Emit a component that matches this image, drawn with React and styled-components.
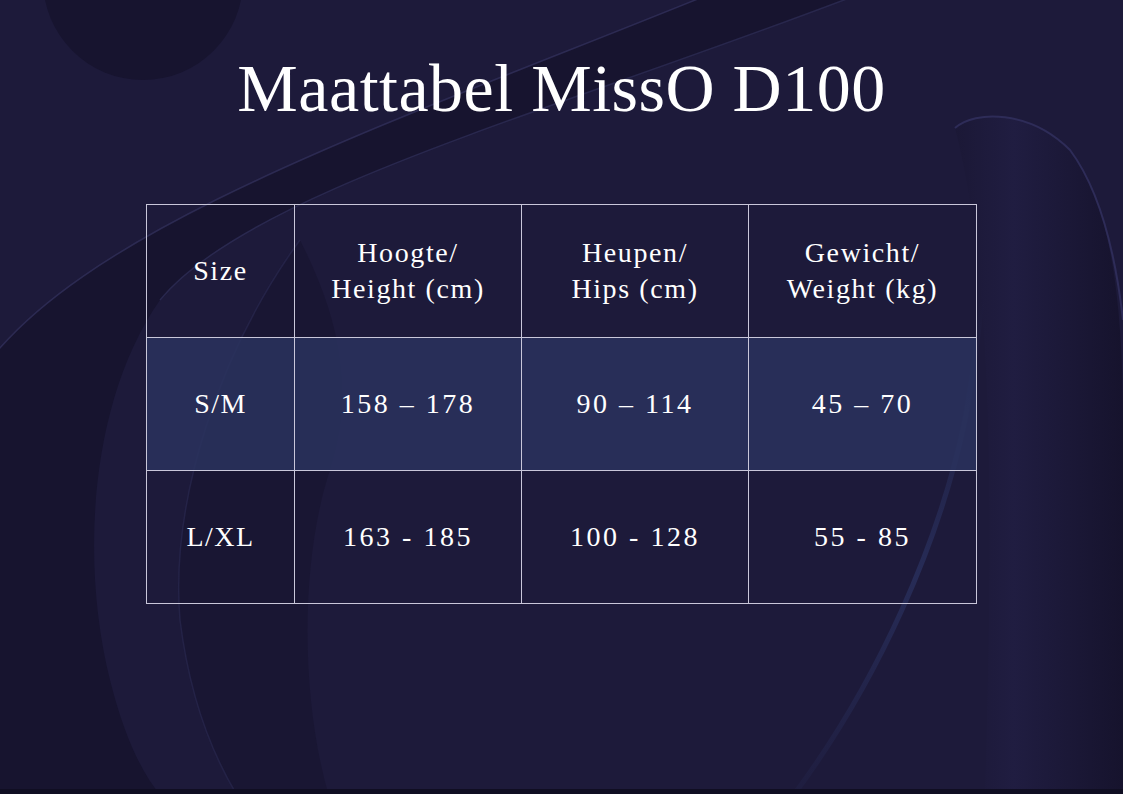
import styled, { createGlobalStyle } from "styled-components";

const rows = [
  { size: "S/M", height: "158 – 178", hips: "90 – 114", weight: "45 – 70", highlight: true },
  { size: "L/XL", height: "163 - 185", hips: "100 - 128", weight: "55 - 85" },
];

const GlobalStyle = createGlobalStyle`
  html, body {
    margin: 0;
    padding: 0;
    background: #1d1a3a;
  }
  * { box-sizing: border-box; }
`;

const Page = styled.div`
  position: relative;
  width: 1123px;
  height: 794px;
  overflow: hidden;
  background: #1d1a3a;
  font-family: "Liberation Serif", "DejaVu Serif", serif;
  color: #ffffff;
  display: flex;
  flex-direction: column;
  align-items: center;
`;

const Backdrop = styled.svg`
  position: absolute;
  inset: 0;
  width: 100%;
  height: 100%;
  z-index: 0;
`;

const Content = styled.div`
  position: relative;
  z-index: 1;
  display: flex;
  flex-direction: column;
  align-items: center;
  padding-top: 48px;
`;

const Title = styled.h1`
  margin: 0;
  font-weight: 400;
  font-size: 68px;
  line-height: 80px;
  letter-spacing: 0.5px;
`;

const Table = styled.table`
  margin-top: 76px;
  border-collapse: collapse;
  table-layout: fixed;
  width: 830px;
`;

const Cell = styled.td`
  border: 1.5px solid #c9c7da;
  height: 133px;
  text-align: center;
  vertical-align: middle;
  font-size: 28px;
  line-height: 36px;
  letter-spacing: ${(p) => (p.$wide ? "2.5px" : "1.5px")};
  background: ${(p) => (p.$highlight ? "rgba(42, 50, 94, 0.85)" : "transparent")};
`;

const Head = styled(Cell).attrs({ as: "th" })`
  font-weight: 400;
  letter-spacing: 1.6px;
`;

export default function App() {
  return (
    <Page>
      <GlobalStyle />
      <Backdrop viewBox="0 0 1123 794" preserveAspectRatio="none">
        <defs>
          <linearGradient id="rightShape" x1="0" y1="0" x2="1" y2="0">
            <stop offset="0" stopColor="#1b1836" />
            <stop offset="0.35" stopColor="#201d41" />
            <stop offset="1" stopColor="#16132d" />
          </linearGradient>
          <linearGradient id="glow" x1="0" y1="1" x2="0" y2="0">
            <stop offset="0" stopColor="#2c3668" stopOpacity="0.1" />
            <stop offset="0.45" stopColor="#2d3769" stopOpacity="0.6" />
            <stop offset="1" stopColor="#2d3769" stopOpacity="0" />
          </linearGradient>
        </defs>
        <circle cx="143" cy="-20" r="100" fill="#17142f" />
        <path d="M-10 360 C 100 220, 400 120, 720 -10 L 870 -10 C 560 110, 250 190, 160 300 C 90 400, 80 560, 110 680 C 125 740, 145 780, 165 800 L -10 800 Z" fill="#17142f" />
        <path d="M-10 360 C 100 220, 400 120, 720 -10" stroke="#34335f" strokeWidth="1.5" fill="none" opacity="0.7" />
        <path d="M870 -10 C 560 110, 250 190, 160 300" stroke="#34335f" strokeWidth="1.5" fill="none" opacity="0.6" />
        <path d="M300 240 C 220 350, 170 500, 180 620 C 190 700, 215 760, 240 800 L 330 800 C 300 700, 300 560, 330 470 C 360 380, 330 300, 300 240 Z" fill="#17142f" opacity="0.6" />
        <path d="M300 240 C 220 350, 170 500, 180 620 C 190 700, 215 760, 240 800" stroke="#2e2d58" strokeWidth="1.5" fill="none" opacity="0.5" />
        <path d="M955 128 C 975 110, 1030 110, 1070 150 C 1110 200, 1123 300, 1123 420 L 1123 794 L 985 794 C 990 600, 1000 300, 955 128 Z" fill="url(#rightShape)" />
        <path d="M955 128 C 975 110, 1030 110, 1070 150 C 1100 190, 1115 250, 1123 320" stroke="#2e2c58" strokeWidth="2" fill="none" />
        <path d="M790 800 C 880 680, 940 540, 965 420 C 972 380, 978 340, 982 300" stroke="url(#glow)" strokeWidth="5" fill="none" />
        <rect x="0" y="789" width="1123" height="5" fill="#100e22" />
      </Backdrop>
      <Content>
        <Title>Maattabel MissO D100</Title>
        <Table>
          <colgroup>
            <col style={{ width: 148 }} />
            <col style={{ width: 227 }} />
            <col style={{ width: 227 }} />
            <col style={{ width: 228 }} />
          </colgroup>
          <thead>
            <tr>
              <Head>Size</Head>
              <Head>Hoogte/<br />Height (cm)</Head>
              <Head>Heupen/<br />Hips (cm)</Head>
              <Head>Gewicht/<br />Weight (kg)</Head>
            </tr>
          </thead>
          <tbody>
            {rows.map((r) => (
              <tr key={r.size}>
                <Cell $highlight={r.highlight}>{r.size}</Cell>
                <Cell $highlight={r.highlight} $wide>{r.height}</Cell>
                <Cell $highlight={r.highlight} $wide>{r.hips}</Cell>
                <Cell $highlight={r.highlight} $wide>{r.weight}</Cell>
              </tr>
            ))}
          </tbody>
        </Table>
      </Content>
    </Page>
  );
}
